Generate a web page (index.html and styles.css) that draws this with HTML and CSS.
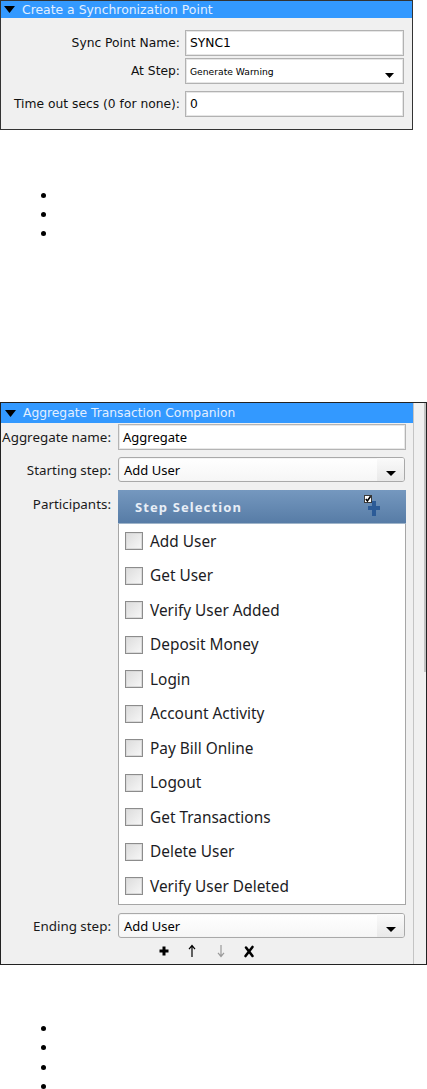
FILE: index.html
```html
<!DOCTYPE html>
<html>
<head>
<meta charset="utf-8">
<title>Sync Point</title>
<link rel="stylesheet" href="styles.css">
</head>
<body>
<div class="sync">
  <div class="hdr">
    <svg class="tri" width="11" height="7" viewBox="0 0 11 7"><polygon points="0,0 11,0 5.5,7" fill="#000"/></svg>
    <span>Create a Synchronization Point</span>
  </div>
  <div class="sync-body">
    <div class="srow">
      <div class="slbl">Sync Point Name:</div>
      <div class="tbox">SYNC1</div>
    </div>
    <div class="srow r2">
      <div class="slbl">At Step:</div>
      <div class="tbox sel"><span class="tiny">Generate Warning</span>
        <svg class="sarrow" width="9" height="5" viewBox="0 0 9 5"><polygon points="0,0 9,0 4.5,5" fill="#000"/></svg>
      </div>
    </div>
    <div class="srow r3">
      <div class="slbl">Time out secs (0 for none):</div>
      <div class="tbox">0</div>
    </div>
  </div>
</div>

<ul class="dots dots-a"><li></li><li></li><li></li></ul>

<div class="agg">
  <div class="agg-main">
    <div class="hdr hdr2">
      <svg class="tri" width="11" height="7" viewBox="0 0 11 7"><polygon points="0,0 11,0 5.5,7" fill="#000"/></svg>
      <span>Aggregate Transaction Companion</span>
    </div>
    <div class="arow row-name">
      <div class="albl">Aggregate name:</div>
      <div class="afield">Aggregate</div>
    </div>
    <div class="arow row-start">
      <div class="albl">Starting step:</div>
      <div class="aselect"><span>Add User</span>
        <div class="abtn"><svg width="10" height="5" viewBox="0 0 10 5"><polygon points="0,0 10,0 5,5" fill="#000"/></svg></div>
      </div>
    </div>
    <div class="arow row-part">
      <div class="albl plbl">Participants:</div>
      <div class="steps">
        <div class="steps-hdr">
          <span>Step Selection</span>
          <svg class="addsel" width="20" height="24" viewBox="0 0 20 24">
            <rect x="1.5" y="2.5" width="7" height="7" fill="#fff" stroke="#3a3a3a"/>
            <path d="M2.8 6 L4.4 8 L7.6 3.2" stroke="#000" stroke-width="1.6" fill="none"/>
            <path d="M11 8 V23 M5 15 H17" stroke="#2c5b97" stroke-width="4"/>
          </svg>
        </div>
        <div class="steps-list">
          <div class="item"><span class="cb"></span><span>Add User</span></div>
          <div class="item"><span class="cb"></span><span>Get User</span></div>
          <div class="item"><span class="cb"></span><span>Verify User Added</span></div>
          <div class="item"><span class="cb"></span><span>Deposit Money</span></div>
          <div class="item"><span class="cb"></span><span>Login</span></div>
          <div class="item"><span class="cb"></span><span>Account Activity</span></div>
          <div class="item"><span class="cb"></span><span>Pay Bill Online</span></div>
          <div class="item"><span class="cb"></span><span>Logout</span></div>
          <div class="item"><span class="cb"></span><span>Get Transactions</span></div>
          <div class="item"><span class="cb"></span><span>Delete User</span></div>
          <div class="item"><span class="cb"></span><span>Verify User Deleted</span></div>
        </div>
      </div>
    </div>
    <div class="arow row-end">
      <div class="albl">Ending step:</div>
      <div class="aselect"><span>Add User</span>
        <div class="abtn"><svg width="10" height="5" viewBox="0 0 10 5"><polygon points="0,0 10,0 5,5" fill="#000"/></svg></div>
      </div>
    </div>
    <div class="tools">
      <svg class="tool t-add" width="12" height="14" viewBox="0 0 12 14"><path d="M6 2.5 V11.5 M1.5 7 H10.5" stroke="#000" stroke-width="3"/></svg>
      <svg class="tool t-up" width="12" height="14" viewBox="0 0 12 14"><path d="M6 13 V2 M3 5.2 L6 1.5 L9 5.2" stroke="#000" stroke-width="1.2" fill="none"/></svg>
      <svg class="tool t-down" width="12" height="14" viewBox="0 0 12 14"><path d="M6 1 V12 M3 8.8 L6 12.5 L9 8.8" stroke="#9a9a9a" stroke-width="1.2" fill="none"/></svg>
      <svg class="tool t-del" width="12" height="14" viewBox="0 0 12 14"><path d="M3 3.5 L9.5 12 M9.5 3 L2.5 12" stroke="#000" stroke-width="2.6" stroke-linecap="round"/></svg>
    </div>
  </div>
  <div class="gutter"><div class="thumb"></div></div>
</div>

<ul class="dots dots-b"><li></li><li></li><li></li><li></li></ul>
</body>
</html>
```

FILE: styles.css
```css
* { box-sizing: border-box; }

body {
  margin: 0;
  background: #fff;
  font-family: "DejaVu Sans", sans-serif;
  color: #000;
}

/* ---------- top panel ---------- */
.sync {
  width: 413px;
  height: 130px;
  border: 1px solid #333;
  background: #f0f0f0;
}

.hdr {
  height: 17px;
  background: #3399ff;
  color: #e2efff;
  font-size: 12.4px;
  display: flex;
  align-items: center;
  white-space: nowrap;
}

.tri {
  flex: none;
  margin: 0 7px 0 3px;
}

.sync-body { padding-top: 12px; }

.srow {
  display: flex;
  align-items: center;
  height: 26px;
}
.srow.r2 { margin-top: 2px; }
.srow.r3 { margin-top: 7px; }

.slbl {
  width: 179px;
  text-align: right;
  font-size: 12.3px;
  color: #111;
  white-space: nowrap;
}

.tbox {
  margin-left: 5px;
  width: 219px;
  height: 26px;
  background: #fff;
  border: 1px solid #b2b2b2;
  box-shadow: inset 0 0 0 1px #e6e6e6;
  display: flex;
  align-items: center;
  padding-left: 4px;
  font-size: 12.3px;
  color: #000;
}

.tbox.sel { justify-content: space-between; padding-right: 9px; }
.tiny { font-size: 9.2px; padding-top: 1px; }
.sarrow { margin-top: 8px; }

/* ---------- bullets ---------- */
.dots {
  font-family: "Liberation Serif", serif;
  font-size: 16px;
  padding-left: 57px;
  margin: 0;
}
.dots li { height: 19px; line-height: 19px; }
.dots-a { margin-top: 55px; margin-bottom: 160px; }
.dots-b { margin-top: 53px; }
.dots-b li { height: 19.3px; }

/* ---------- aggregate panel ---------- */
.agg {
  width: 427px;
  height: 563px;
  border: 1px solid #222;
  background: #f0f0f0;
  display: flex;
}

.agg-main {
  width: 412px;
  display: flex;
  flex-direction: column;
}

.hdr2 {
  height: 20px;
  font-size: 12.3px;
}
.hdr2 .tri { margin: 1px 7px 0 4px; }

.gutter {
  width: 13px;
  border-left: 1px solid #c4c4c4;
  display: flex;
  justify-content: flex-end;
}
.thumb {
  width: 2px;
  height: 269px;
  background: #c2c2c2;
}

.arow { display: flex; align-items: center; }
.row-name { margin-top: 1px; }
.row-start { margin-top: 7px; }
.row-part { margin-top: 8px; align-items: flex-start; }
.row-end { margin-top: 8px; }

.albl {
  width: 110px;
  text-align: right;
  font-family: "Noto Sans", sans-serif;
  font-size: 13.4px;
  color: #1a1a1a;
  white-space: nowrap;
  flex: none;
}
.plbl { padding-top: 5px; }

.afield {
  margin-left: 7px;
  width: 288px;
  height: 26px;
  background: #fff;
  border: 1px solid #b4b4b4;
  box-shadow: inset 0 0 0 1px #e8e8e8;
  display: flex;
  align-items: center;
  padding-left: 4px;
  font-family: "Noto Sans", sans-serif;
  font-size: 13px;
  color: #000;
}

.aselect {
  margin-left: 7px;
  width: 287px;
  height: 25px;
  border: 1px solid #a9a9a9;
  border-radius: 3px;
  background: linear-gradient(#ffffff, #f6f6f6);
  box-shadow: inset 0 0 0 1px #f4f4f4;
  display: flex;
  align-items: center;
  justify-content: space-between;
  padding-left: 5px;
  font-family: "Noto Sans", sans-serif;
  font-size: 13px;
  color: #000;
}

.abtn {
  width: 27px;
  height: 100%;
  display: flex;
  align-items: center;
  justify-content: center;
  padding-top: 8px;
  background: linear-gradient(#fafafa, #e9e9e9);
  border-radius: 0 2px 2px 0;
}

.steps {
  margin-left: 7px;
  width: 288px;
  display: flex;
  flex-direction: column;
}

.steps-hdr {
  height: 34px;
  background: linear-gradient(#7598bf, #577ca6);
  border-bottom: 1px solid #9fb4c9;
  display: flex;
  align-items: center;
  padding-left: 17px;
  font-family: "Noto Sans", sans-serif;
  font-weight: bold;
  font-size: 13px;
  letter-spacing: 1.1px;
  color: #e8eef6;
}

.addsel {
  margin-left: auto;
  margin-right: 23px;
  align-self: flex-start;
  margin-top: 3px;
}

.steps-list {
  height: 381px;
  background: #fff;
  border: 1px solid #a6a6a6;
  border-top: none;
  display: flex;
  flex-direction: column;
}

.item {
  height: 34.5px;
  display: flex;
  align-items: center;
  padding-left: 6px;
  font-family: "Noto Sans", sans-serif;
  font-size: 15.4px;
  color: #1c1c24;
  white-space: nowrap;
}

.cb {
  width: 18px;
  height: 18px;
  flex: none;
  margin-right: 7px;
  border: 1px solid #8c8c8c;
  box-shadow: inset 0 0 0 1px #d9d9d9;
  background: linear-gradient(135deg, #dcdcdc, #f7f7f7);
}

.tools {
  height: 26px;
  display: flex;
  align-items: center;
  padding-left: 157px;
}
.tool { flex: none; }
.t-up { margin-left: 16px; }
.t-down { margin-left: 17px; }
.t-del { margin-left: 16px; }
```
